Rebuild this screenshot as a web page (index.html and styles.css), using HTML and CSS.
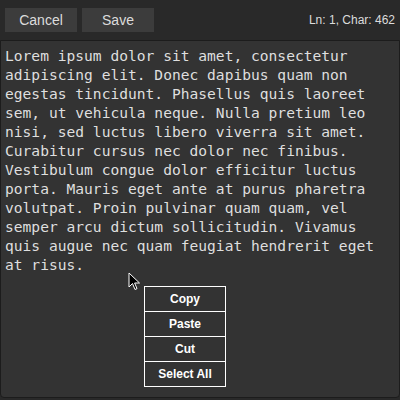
FILE: index.html
```html
<!DOCTYPE html>
<html>
<head>
<meta charset="utf-8">
<link rel="stylesheet" href="styles.css">
</head>
<body>
<div class="app">
  <div class="toolbar">
    <button class="btn">Cancel</button>
    <button class="btn">Save</button>
    <span class="status">Ln: 1, Char: 462</span>
  </div>
  <div class="editor">
    <div class="text">Lorem ipsum dolor sit amet, consectetur adipiscing elit. Donec dapibus quam non egestas tincidunt. Phasellus quis laoreet sem, ut vehicula neque. Nulla pretium leo nisi, sed luctus libero viverra sit amet. Curabitur cursus nec dolor nec finibus. Vestibulum congue dolor efficitur luctus porta. Mauris eget ante at purus pharetra volutpat. Proin pulvinar quam quam, vel semper arcu dictum sollicitudin. Vivamus quis augue nec quam feugiat hendrerit eget at risus.</div>
    <svg class="pointer" width="14" height="20" viewBox="0 0 14 20">
      <path d="M1 1 L1 15 L4.5 11.5 L7 17.5 L9 16.6 L6.6 11 L11.5 11 Z" fill="#000" stroke="#fff" stroke-width="1"/>
    </svg>
    <ul class="menu">
      <li>Copy</li>
      <li>Paste</li>
      <li>Cut</li>
      <li>Select All</li>
    </ul>
  </div>
</div>
</body>
</html>
```

FILE: styles.css
```css
html, body {
  margin: 0;
  padding: 0;
  background: #292929;
}
.app {
  width: 400px;
  height: 400px;
  display: flex;
  flex-direction: column;
  background: #292929;
}
.toolbar {
  height: 40px;
  display: flex;
  align-items: flex-start;
  padding: 8px 5px 0 5px;
  box-sizing: border-box;
  gap: 5px;
}
.btn {
  width: 72px;
  height: 24px;
  border: none;
  background: #3c3c3c;
  color: #dcdcdc;
  font-family: "Liberation Sans", Arial, sans-serif;
  font-size: 14px;
  padding: 0;
  margin: 0;
}
.status {
  margin-left: auto;
  margin-top: 5px;
  color: #dcdcdc;
  font-family: "Liberation Sans", Arial, sans-serif;
  font-size: 12px;
}
.editor {
  position: relative;
  flex: 1;
  margin-bottom: 2px;
  background: #333333;
  border: 1px solid #1c1c1c;
  border-radius: 0 0 4px 4px;
  padding: 5px 4px;
}
.text {
  width: 385px;
  color: #dfdfdf;
  font-family: "DejaVu Sans Mono", monospace;
  font-size: 14.6px;
  line-height: 19px;
}
.pointer {
  position: absolute;
  left: 127px;
  top: 231px;
}
.menu {
  position: absolute;
  left: 143px;
  top: 245px;
  width: 80px;
  margin: 0;
  padding: 0;
  list-style: none;
  border: 1px solid #ffffff;
  background: #333333;
}
.menu li {
  height: 24px;
  line-height: 24px;
  text-align: center;
  color: #ffffff;
  font-family: "Liberation Sans", Arial, sans-serif;
  font-weight: bold;
  font-size: 12px;
  border-top: 1px solid #ffffff;
}
.menu li:first-child {
  border-top: none;
}
```
